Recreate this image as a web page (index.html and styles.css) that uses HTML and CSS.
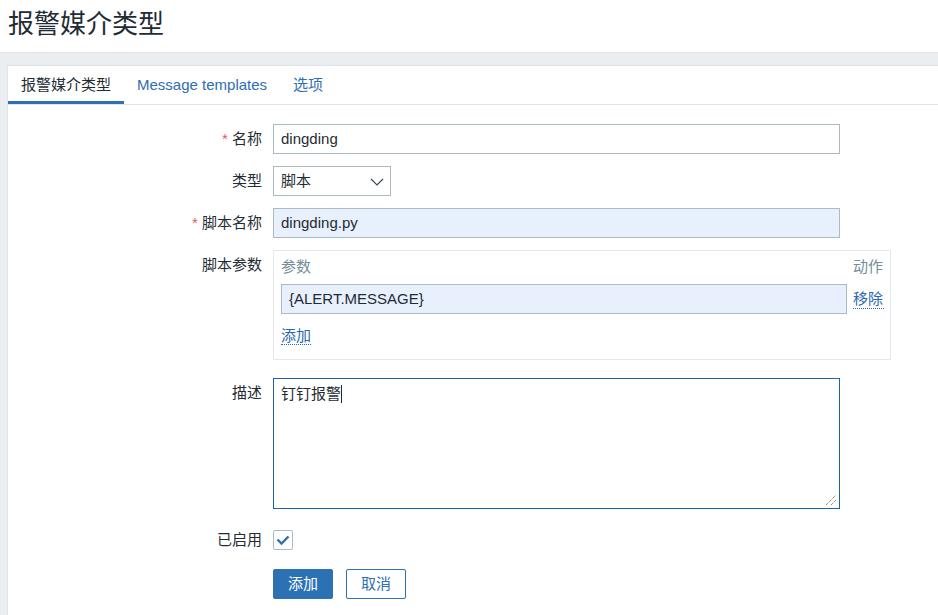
FILE: index.html
```html
<!DOCTYPE html>
<html lang="zh-CN">
<head>
<meta charset="utf-8">
<title>报警媒介类型</title>
<link rel="stylesheet" href="styles.css">
</head>
<body>
<header class="page-header">
  <h1 class="page-title">报警媒介类型</h1>
</header>
<main class="page-body">
  <section class="panel">
    <ul class="tabs">
      <li class="tab tab-active">报警媒介类型</li>
      <li class="tab">Message templates</li>
      <li class="tab">选项</li>
    </ul>
    <form class="form">
      <div class="row">
        <label class="label"><span class="req">*</span> 名称</label>
        <div class="field"><div class="input input-wide">dingding</div></div>
      </div>
      <div class="row">
        <label class="label">类型</label>
        <div class="field">
          <div class="input select">脚本
            <svg class="chev" width="14" height="8" viewBox="0 0 14 8"><polyline points="1,1 7,7 13,1" fill="none" stroke="#3a4a52" stroke-width="1.2"/></svg>
          </div>
        </div>
      </div>
      <div class="row">
        <label class="label"><span class="req">*</span> 脚本名称</label>
        <div class="field"><div class="input input-wide input-filled">dingding.py</div></div>
      </div>
      <div class="row">
        <label class="label">脚本参数</label>
        <div class="field">
          <div class="params">
            <div class="params-head">
              <span class="params-col">参数</span>
              <span class="params-act">动作</span>
            </div>
            <div class="params-row">
              <div class="input input-filled params-input">{ALERT.MESSAGE}</div>
              <span class="link params-act">移除</span>
            </div>
            <div class="params-add"><span class="link">添加</span></div>
          </div>
        </div>
      </div>
      <div class="row row-desc">
        <label class="label">描述</label>
        <div class="field">
          <div class="textarea">钉钉报警<span class="caret"></span>
            <svg class="grip" width="12" height="12" viewBox="0 0 12 12"><line x1="1" y1="11" x2="11" y2="1" stroke="#555" stroke-width="1" stroke-dasharray="1 1"/><line x1="6" y1="11" x2="11" y2="6" stroke="#555" stroke-width="1" stroke-dasharray="1 1"/></svg>
          </div>
        </div>
      </div>
      <div class="row row-check">
        <label class="label label-small">已启用</label>
        <div class="field">
          <span class="checkbox">
            <svg width="18" height="18" viewBox="0 0 18 18"><polyline points="3.5,8.5 7.5,12.5 14.5,5.5" fill="none" stroke="#2c71b4" stroke-width="2.4"/></svg>
          </span>
        </div>
      </div>
      <div class="row row-buttons">
        <span></span>
        <div class="field buttons">
          <span class="btn btn-primary">添加</span>
          <span class="btn btn-alt">取消</span>
        </div>
      </div>
    </form>
  </section>
</main>
</body>
</html>
```
FILE: styles.css
```css
html, body {
  margin: 0;
  padding: 0;
  background: #ffffff;
}
body {
  font-family: "Liberation Sans", "Noto Sans CJK SC", sans-serif;
  font-size: 15px;
  color: #1f2c33;
  width: 938px;
  height: 615px;
  overflow: hidden;
}
.page-header {
  height: 52px;
  display: flex;
  align-items: center;
  padding-left: 8px;
  border-bottom: 1px solid #dfe4e7;
  background: #ffffff;
}
.page-title {
  margin: 0;
  font-size: 26px;
  font-weight: normal;
  line-height: 30px;
  margin-top: -4px;
}
.page-body {
  box-sizing: border-box;
  background: #ebeef0;
  padding: 12px 0 0 7px;
  height: 562px;
}
.panel {
  box-sizing: border-box;
  background: #ffffff;
  border: 1px solid #dfe4e7;
  border-right: 0;
  border-bottom: 0;
  height: 550px;
}
.tabs {
  list-style: none;
  margin: 0;
  padding: 0;
  display: flex;
  border-bottom: 1px solid #dfe4e7;
}
.tab {
  padding: 3px 13px 0 13px;
  height: 32px;
  line-height: 32px;
  border-bottom: 3px solid transparent;
  color: #2f6db5;
  white-space: nowrap;
}
.tab-active {
  color: #1f2c33;
  border-bottom-color: #2c71b4;
}
.form {
  padding-top: 19px;
  display: flex;
  flex-direction: column;
  gap: 12px;
}
.row {
  display: grid;
  grid-template-columns: 254px auto;
  column-gap: 11px;
  align-items: start;
}
.label {
  text-align: right;
  line-height: 30px;
  white-space: nowrap;
}
.label-small {
  line-height: 20px;
}
.req {
  color: #e45959;
}
.field {
  display: flex;
}
.input {
  box-sizing: border-box;
  height: 30px;
  line-height: 28px;
  border: 1px solid #acbbc2;
  padding: 0 8px 0 7px;
  background: #ffffff;
  white-space: nowrap;
}
.input-wide {
  width: 567px;
}
.input-filled {
  background: #e8f0fe;
}
.select {
  width: 118px;
  position: relative;
}
.chev {
  position: absolute;
  right: 6px;
  top: 11px;
}
.params {
  box-sizing: border-box;
  width: 618px;
  height: 110px;
  border: 1px solid #e6e9eb;
  padding: 7px 6px 0 7px;
}
.params-head {
  display: flex;
  line-height: 18px;
  color: #768d99;
}
.params-col {
  width: 566px;
  margin-right: 6px;
}
.params-act {
  width: 31px;
  white-space: nowrap;
}
.params-row {
  display: flex;
  align-items: center;
  margin-top: 8px;
}
.params-input {
  width: 566px;
  margin-right: 6px;
}
.params-add {
  margin-top: 13px;
  line-height: 18px;
}
.link {
  color: #2a67b0;
  border-bottom: 1px dotted #2a67b0;
  line-height: 18px;
}
.row-desc {
  margin-top: 6px;
}
.textarea {
  position: relative;
  box-sizing: border-box;
  width: 567px;
  height: 131px;
  border: 1px solid #1f63a5;
  padding: 6px 8px 6px 7px;
  line-height: 18px;
}
.caret {
  display: inline-block;
  width: 1px;
  height: 18px;
  background: #1f2c33;
  vertical-align: top;
}
.grip {
  position: absolute;
  right: 2px;
  bottom: 2px;
}
.row-check {
  margin-top: 9px;
}
.checkbox {
  box-sizing: border-box;
  width: 20px;
  height: 20px;
  border: 1px solid #acbbc2;
  border-radius: 2px;
  display: flex;
  align-items: center;
  justify-content: center;
}
.row-buttons {
  margin-top: 7px;
}
.buttons {
  gap: 13px;
}
.btn {
  box-sizing: border-box;
  width: 60px;
  height: 30px;
  line-height: 28px;
  text-align: center;
  border-radius: 2px;
  border: 1px solid #2c71b4;
}
.btn-primary {
  background: #2c71b4;
  color: #ffffff;
}
.btn-alt {
  background: #ffffff;
  color: #2c71b4;
}
```
